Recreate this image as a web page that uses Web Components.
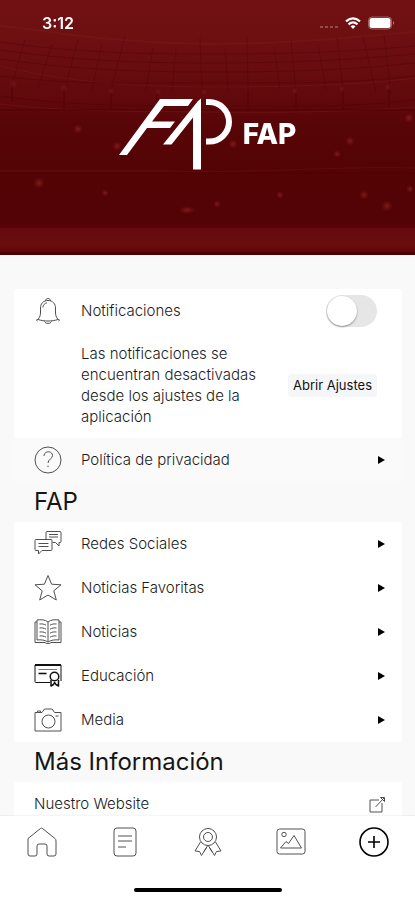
<!DOCTYPE html>
<html lang="es">
<head>
<meta charset="utf-8">
<meta name="viewport" content="width=device-width, initial-scale=1">
<title>FAP</title>
<style>
  body { margin: 0; font-family: Inter, "Liberation Sans", sans-serif; color: #1c1c1c; }
</style>
</head>
<body>
<fap-app>
  <fap-header slot="header" time="3:12">FAP</fap-header>

  <fap-panel>
    <fap-switch-row icon="bell">Notificaciones</fap-switch-row>
    <fap-notice action="Abrir Ajustes">Las notificaciones se encuentran desactivadas desde los ajustes de la aplicación</fap-notice>
  </fap-panel>
  <fap-panel plain>
    <fap-row icon="help" href="#privacidad">Política de privacidad</fap-row>
  </fap-panel>

  <fap-heading>FAP</fap-heading>
  <fap-panel>
    <fap-row icon="chat" href="#redes">Redes Sociales</fap-row>
    <fap-row icon="star" href="#favoritas">Noticias Favoritas</fap-row>
    <fap-row icon="book" href="#noticias">Noticias</fap-row>
    <fap-row icon="diploma" href="#educacion">Educación</fap-row>
    <fap-row icon="camera" href="#media">Media</fap-row>
  </fap-panel>

  <fap-heading>Más Información</fap-heading>
  <fap-panel>
    <fap-row external href="#website">Nuestro Website</fap-row>
  </fap-panel>

  <fap-tabs slot="tabs"></fap-tabs>
</fap-app>

<script>
const define = (name, html, setup) => {
  const template = document.createElement('template');
  template.innerHTML = html;
  customElements.define(name, class extends HTMLElement {
    constructor() {
      super();
      this.attachShadow({ mode: 'open' }).append(template.content.cloneNode(true));
    }
    connectedCallback() { if (setup) setup(this, this.shadowRoot); }
  });
};

const ICONS = {
  bell: `<path d="M4 22.500C6 20 6.500 18 6.500 15V11C6.500 7 9 3.500 14 3.500S21.500 7 21.500 11V15C21.500 18 22 20 24 22.500C18 24.500 10 24.500 4 22.500ZM4 22.500C2.500 22 2 23.500 3.500 24M24 22.500C25.500 22 26 23.500 24.500 24M11.500 3.800C11.500 .8 16.500 .8 16.500 3.800M10.500 24.500C11.500 27 16.500 27 17.500 24.500M8.800 10.500C9 8 10.800 6.300 13 5.800"/>`,
  help: `<circle cx="14" cy="14" r="13"/><path d="M10 10C10 4.500 18.500 4.500 18.500 9.500C18.500 13 14 13 14 17M14 19.500V21"/>`,
  chat: `<path d="M12 9.500V2.500Q12 1.500 13 1.500H26Q27 1.500 27 2.500V11.500Q27 12.500 26 12.500H25V16L21.500 12.500H18.500M2 9.500H17Q18 9.500 18 10.500V19.500Q18 20.500 17 20.500H8L4.500 24V20.500H2Q1 20.500 1 19.500V10.500Q1 9.500 2 9.500ZM15 4.500H24M15 7H24M4.500 13.500H14.500M4.500 16.500H14.500"/>`,
  star: `<path d="M14 1.500L17.600 10.200L27 10.800L19.800 16.800L22.300 26L14 21L5.700 26L8.200 16.800L1 10.800L10.400 10.200Z"/>`,
  book: `<path d="M14 4C11 1.500 7 1.500 3 2V22C7 21.500 11 22 14 24C17 22 21 21.500 25 22V2C21 1.500 17 1.500 14 4ZM14 4V24M3 4H1V24.500H11C12 26 16 26 17 24.500H27V4H25M5.500 6C8 5.700 10 6 12 7.200M5.500 10C8 9.700 10 10 12 11.200M5.500 14C8 13.700 10 14 12 15.200M5.500 18C8 17.700 10 18 12 19.200M22.500 6C20 5.700 18 6 16 7.200M22.500 10C20 9.700 18 10 16 11.200M22.500 14C20 13.700 18 14 16 15.200M22.500 18C20 17.700 18 18 16 19.200"/>`,
  diploma: `<g stroke="#111"><path d="M16 20.500H2Q1 20.500 1 19.500V3H27V19"/><path d="M1 3H27" stroke-width="2"/><path d="M4.500 7.500H23" stroke="#777"/><path d="M4.500 11.500H12.500" stroke-width="1.600"/><circle cx="20.500" cy="14.500" r="4.300" stroke-width="1.500"/><path d="M17 18V24L19.500 22.500L20.500 20.500L22 22.500L24.500 24V18" stroke-width="1.500"/></g>`,
  camera: `<path d="M1 6.500H8L10.500 3H18L20.500 6.500H27V25H1ZM3.500 6.500V5H6.500V6.500M21.500 10H24.500"/><circle cx="14.500" cy="15.500" r="6.500"/>`,
  home: `<path d="M1 11.500L13.500 1.500Q14.500 .8 15.500 1.500L28 11.500Q29 12.500 29 14V27Q29 29 27 29H22Q20 29 20 27V19Q20 17 18 17H12Q10 17 10 19V27Q10 29 8 29H3Q1 29 1 27Z"/>`,
  doc: `<rect x="4" y="1" width="22" height="28" rx="3"/><path d="M8 9H22M8 14H22M8 20H16"/>`,
  ribbon: `<circle cx="15" cy="10" r="8.500"/><circle cx="15" cy="10" r="4.500"/><path d="M7.500 15L2 24L6.500 24.500L8.500 28.500L13.500 20.500M22.500 15L28 24L23.500 24.500L21.500 28.500L15 18L11 24.500M16.800 21L19 24.800"/>`,
  image: `<rect x="1" y="2" width="28" height="25" rx="2.500"/><circle cx="8" cy="7.500" r="2.200"/><path d="M4.500 21L10 14.500L12.500 16.500L18 8.500L25.500 21Z"/>`,
  plus: `<g stroke="#000" stroke-width="1.600"><circle cx="15" cy="15" r="14"/><path d="M15 9V21M9 15H21"/></g>`,
  external: `<path d="M11 5H2V17H14V8M7.500 12L16 3M12.500 2.500H16.500V6.500L12.500 2.500"/>`,
  arrow: `<path d="M2 1V9L9 5Z" fill="#000" stroke="none"/>`
};
const SIZES = { home: 30, doc: 30, ribbon: 30, image: 30, plus: 30, external: 18, arrow: 10 };

define('fap-icon', `
  <style>
    :host { display: block; flex: none; line-height: 0; color: #505050; }
    svg { display: block; fill: none; stroke: currentColor; stroke-width: 1; stroke-linejoin: round; }
  </style>`, (el, root) => {
  const name = el.getAttribute('name');
  const s = SIZES[name] || 28;
  root.innerHTML += `<svg aria-hidden="true" width="${s}" height="${s}" viewBox="0 0 ${s} ${s}">${ICONS[name]}</svg>`;
});

define('fap-app', `
  <style>
    :host { display: flex; flex-direction: column; height: 100vh; background: #f9f9f9; }
    main { flex: 1; min-height: 0; overflow-y: auto; scrollbar-width: none; padding: 34px 13px 12px 14px; }
  </style>
  <slot name="header"></slot>
  <main><slot></slot></main>
  <slot name="tabs"></slot>`);

define('fap-stadium', `
  <style>
    :host { display: block; }
    svg { display: block; width: 100%; height: 100%; }
  </style>
  <svg viewBox="0 0 415 255" preserveAspectRatio="none" aria-hidden="true">
    <defs>
      <linearGradient id="sky" x1="0" y1="0" x2="0" y2="1">
        <stop offset="0" stop-color="#711113"/>
        <stop offset=".2" stop-color="#6c0e11"/>
        <stop offset=".38" stop-color="#61090c"/>
        <stop offset=".5" stop-color="#570507"/>
        <stop offset=".8" stop-color="#530305"/>
        <stop offset=".88" stop-color="#540305"/>
        <stop offset=".9" stop-color="#660b0d"/>
        <stop offset=".96" stop-color="#690d0f"/>
        <stop offset="1" stop-color="#5d0507"/>
      </linearGradient>
      <radialGradient id="glow"><stop offset="0" stop-color="#b03436" stop-opacity=".5"/><stop offset="1" stop-color="#8a2022" stop-opacity="0"/></radialGradient>
    </defs>
    <rect width="415" height="255" fill="url(#sky)"/>
    <g fill="none" stroke="#791a1c" opacity=".5">
      <path d="M0 26C50 30 90 42 210 44C300 44 360 36 415 32" stroke-width="2"/>
      <path d="M0 66C60 80 120 87 210 87S370 84 415 78"/>
      <path d="M0 104C80 113 150 111 210 112S350 112 415 107"/>
      <path d="M0 171H170C240 174 330 166 415 168" opacity=".6"/>
    </g>
    <g fill="none" stroke="#4a0204" opacity=".35">
      <path d="M0 42C70 52 130 54 210 54S350 52 415 46M0 50C70 60 130 63 210 63S350 60 415 54M0 59C70 69 130 72 210 72S350 70 415 63M0 76C70 85 140 83 210 83S350 84 415 76M0 96C70 106 140 106 210 106S350 108 415 100"/>
      <path d="M25 40L12 84M52 44L38 88M78 40L64 92M102 44L92 90M125 36L111 90M153 48L146 90M176 49L172 90M200 38L202 90M225 48L228 90M247 36L248 92M274 47L280 90M291 40L296 92M318 44L326 90M337 38L343 90M363 36L376 92M384 34L391 94"/>
      <path d="M12 84V102M64 88V110M111 90V111M157 92V110M248 92V111M296 90V111M343 88V110M389 86V108M0 110H415M0 173H415M0 227H415" stroke-width="2"/>
    </g>
    <g fill="url(#glow)">
      <circle cx="78" cy="129" r="5"/><circle cx="39" cy="183" r="6"/><circle cx="105" cy="193" r="4"/>
      <ellipse cx="187" cy="210" rx="9" ry="4"/><circle cx="217" cy="204" r="4"/><circle cx="233" cy="144" r="5"/>
      <circle cx="117" cy="146" r="5"/><circle cx="350" cy="141" r="5"/><circle cx="337" cy="154" r="4"/>
      <circle cx="280" cy="195" r="4"/><circle cx="364" cy="195" r="5"/><circle cx="387" cy="206" r="6"/>
      <circle cx="409" cy="118" r="5"/><circle cx="410" cy="189" r="4"/>
    </g>
    <g fill="url(#glow)" opacity=".6">
      <circle cx="13" cy="84" r="5"/>
      <circle cx="64" cy="88" r="5"/><circle cx="111" cy="91" r="4"/><circle cx="158" cy="92" r="4"/>
      <circle cx="204" cy="92" r="4"/><circle cx="295" cy="91" r="4"/><circle cx="342" cy="89" r="4"/><circle cx="388" cy="87" r="4"/>
    </g>
    <rect y="252" width="415" height="3" fill="#500000"/>
  </svg>`);

define('fap-header', `
  <style>
    :host { display: block; flex: none; position: relative; color: #fff; }
    fap-stadium { position: absolute; inset: 0; }
    .content { position: relative; }
    .status { display: flex; align-items: center; height: 46px; padding: 0 20px 0 42px; gap: 7px; }
    time { margin-right: auto; font-size: 16px; font-weight: 600; line-height: 20px; }
    .brand { display: flex; align-items: center; justify-content: center; gap: 9px; padding: 52px 0 85px; }
    h1 { margin: 0; font-size: 28px; line-height: 32px; font-weight: 800; }
    svg { display: block; flex: none; fill: #fff; }
  </style>
  <fap-stadium></fap-stadium>
  <div class="content">
    <div class="status">
      <time></time>
      <svg width="18" height="12" viewBox="0 0 18 12" opacity=".25"><path d="M0 9H3V11H0ZM5 9H8V11H5ZM10 9H13V11H10ZM15 9H18V11H15Z"/></svg>
      <svg width="16" height="12" viewBox="0 0 16 12"><path d="M8 12L5.500 9.300Q8 7.300 10.500 9.300Z"/><path d="M1 4.300Q8 -1.500 15 4.300M3.500 7.300Q8 3.500 12.500 7.300" fill="none" stroke="#fff" stroke-width="2.200"/></svg>
      <svg width="27" height="14" viewBox="0 0 27 14"><rect x=".5" y="1" width="23" height="12" rx="3.500" fill="none" stroke="#fff" opacity=".35"/><rect x="1.500" y="2" width="21" height="10" rx="2.500"/><path d="M25 5Q27 7 25 9Z" opacity=".5"/></svg>
    </div>
    <div class="brand">
      <svg width="115" height="72" viewBox="119 98 115 72" aria-hidden="true">
        <path d="M119 155L160 99H193L188 106H164L152 121.500H175L170 128H147L127 155Z"/>
        <path d="M163 144.500L198 101L201 98.500V169.500H193V117.500L171.500 144.500Z"/>
        <path d="M206 102H209A20 19.800 0 0 1 209 141.600H206" fill="none" stroke="#fff" stroke-width="6"/>
      </svg>
      <h1><slot></slot></h1>
    </div>
  </div>`, (el, root) => { root.querySelector('time').textContent = el.getAttribute('time'); });

define('fap-panel', `
  <style>
    :host { display: block; background: #fff; border-radius: 2px; }
    :host([plain]) { background: #fafafa; }
  </style>
  <slot></slot>`);

define('fap-heading', `
  <style>
    :host { display: block; padding: 0 20px; }
    h2 { margin: 0; font-size: 24px; line-height: 40px; font-weight: 400; color: #161616; }
  </style>
  <h2><slot></slot></h2>`);

define('fap-row', `
  <style>
    :host { display: block; }
    a { display: flex; align-items: center; height: 44px; padding: 0 16px 0 20px; color: inherit; text-decoration: none; font-size: 15px; line-height: 20px; font-weight: 300; }
    span { flex: 1; }
    .lead { margin-right: 19px; }
  </style>
  <a><span><slot></slot></span></a>`, (el, root) => {
  const a = root.querySelector('a');
  a.href = el.getAttribute('href');
  const icon = el.getAttribute('icon');
  if (icon) a.insertAdjacentHTML('afterbegin', `<fap-icon class="lead" name="${icon}"></fap-icon>`);
  a.insertAdjacentHTML('beforeend', `<fap-icon name="${el.hasAttribute('external') ? 'external' : 'arrow'}"></fap-icon>`);
});

define('fap-switch-row', `
  <style>
    :host { display: block; }
    label { display: flex; align-items: center; height: 44px; padding: 0 25px 0 20px; font-size: 15px; line-height: 20px; font-weight: 300; }
    span { flex: 1; margin-left: 19px; }
    input { appearance: none; flex: none; display: flex; margin: 0; width: 51px; height: 32px; border-radius: 16px; background: #e6e6e6; }
    input::before { content: ""; width: 30px; height: 30px; margin: 1px; border-radius: 50%; background: #fff; box-shadow: 0 1px 2px #0006; }
    input:checked { background: #690d0f; justify-content: flex-end; }
  </style>
  <label><fap-icon name="bell"></fap-icon><span><slot></slot></span><input type="checkbox" role="switch"></label>`);

define('fap-notice', `
  <style>
    :host { display: flex; align-items: center; justify-content: space-between; gap: 16px; padding: 10px 25px 11px 67px; }
    p { margin: 0; flex: 1; font-size: 15px; line-height: 21px; font-weight: 300; }
    button { flex: none; border: 0; border-radius: 3px; padding: 0 5px; background: #f5f6f8; color: #111; font: 400 13px/23px Inter, "Liberation Sans", sans-serif; }
  </style>
  <p><slot></slot></p>
  <button type="button"></button>`, (el, root) => { root.querySelector('button').textContent = el.getAttribute('action'); });

define('fap-tabs', `
  <style>
    :host { display: block; flex: none; background: #fff; box-shadow: 0 -1px 1px #0000000a; position: relative; }
    nav { display: grid; grid-template-columns: repeat(5, 1fr); }
    a { display: flex; justify-content: center; padding: 11px 0; }
    .bar { width: 148px; max-width: 50%; height: 4px; margin: 20px auto 8px; border-radius: 2px; background: #000; }
  </style>
  <nav>
    <a href="#inicio" aria-label="Inicio"><fap-icon name="home"></fap-icon></a>
    <a href="#articulos" aria-label="Artículos"><fap-icon name="doc"></fap-icon></a>
    <a href="#premios" aria-label="Premios"><fap-icon name="ribbon"></fap-icon></a>
    <a href="#galeria" aria-label="Galería"><fap-icon name="image"></fap-icon></a>
    <a href="#mas" aria-label="Más" aria-current="page"><fap-icon name="plus"></fap-icon></a>
  </nav>
  <div class="bar"></div>`);
</script>
</body>
</html>
